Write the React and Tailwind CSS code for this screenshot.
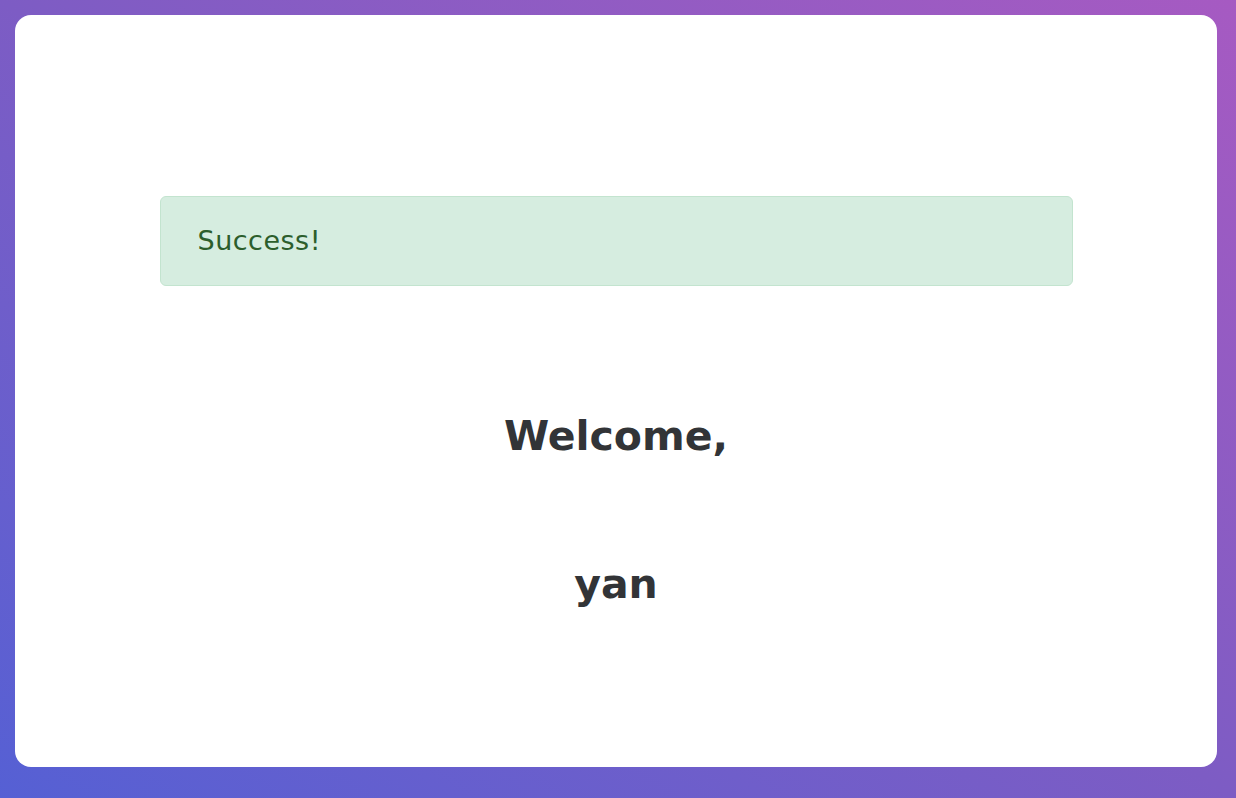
import React from 'react';

const App = () => {
  const user = 'yan';

  return (
    <div
      className="min-h-screen w-full pl-[15px] pt-[15px] bg-linear-to-tr from-[#5560d4] via-[#7d5cc4] to-[#a65ac2]"
      style={{ fontFamily: "'DejaVu Sans', 'Noto Sans', Arial, sans-serif" }}
    >
      <div className="h-[752px] w-[1202px] bg-white rounded-[16px] flex flex-col items-center pt-[181px]">
        <div className="w-[913px] h-[90px] flex items-center px-[37px] rounded-[6px] bg-[#d6ede0] border border-[#c3e4cf] text-[#2c5e2c] text-[27px] tracking-[0.5px]">
          Success!
        </div>

        <h1 className="mt-[122px] text-[41px] leading-[56px] font-bold text-[#323437]">
          Welcome,
        </h1>
        <h1 className="mt-[92px] text-[41px] leading-[56px] font-bold text-[#323437]">
          {user}
        </h1>
      </div>
    </div>
  );
};

export default App;
